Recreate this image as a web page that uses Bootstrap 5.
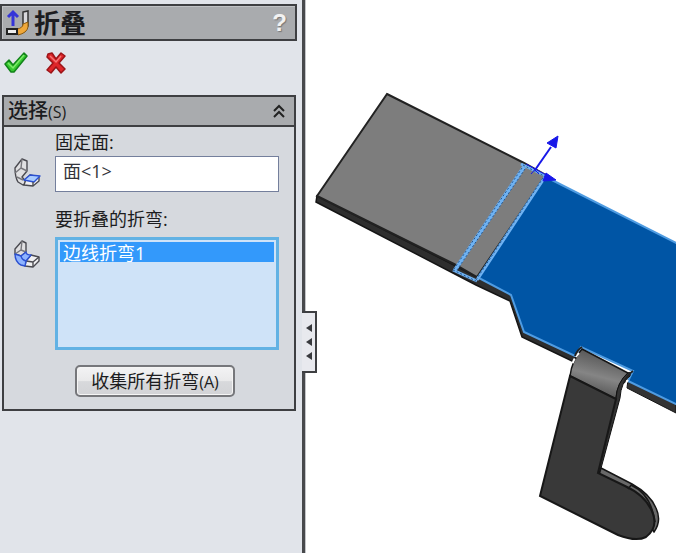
<!DOCTYPE html>
<html lang="zh-CN">
<head>
<meta charset="utf-8">
<meta name="viewport" content="width=device-width, initial-scale=1">
<title>折叠</title>
<link rel="stylesheet" href="https://cdn.jsdelivr.net/npm/bootstrap@5.3.0/dist/css/bootstrap.min.css">
<style>
  body { font-family: "Open Sans", "Noto Sans CJK SC", sans-serif; font-size: 18px; line-height: 24px; color: #1c1c20; background: #fff; }
  svg { display: block; flex: none; }
  .property-panel { width: 305px; flex: none; padding: 4px 5px 0 0; background: #e1e4ea; border-right: 3px solid #48494c; box-shadow: 1px 0 0 #c4c5c8; }
  .title-bar { height: 37px; margin-bottom: 9px; background: #a9abae; border: 2px solid #3e3f42; box-shadow: inset 1px 1px 0 #c0c2c5; }
  .title-bar h1 { font-size: 26px; line-height: 32px; font-weight: 700; }
  .plain-btn { border: 0; padding: 0; background: none; color: #222; }
  .help-btn { font: bold 24px/32px "Liberation Sans", sans-serif; color: #f2f2f2; text-shadow: 1px 1px 1px #777; }
  .action-row { height: 25px; margin-bottom: 20px; }
  .group-panel { margin: 0 1px 0 2px; background: #d6d9de; border: 2px solid #3e3f42; }
  .group-head { height: 30px; background: #a9abae; border-bottom: 2px solid #3e3f42; }
  .group-head h2 { font-size: 20px; line-height: 28px; font-weight: 500; }
  .latin { font-size: 16px; font-weight: 400; }
  .group-body { padding: 3px 15px 12px 8px; }
  .field-row { display: grid; grid-template-columns: 30px 1fr; column-gap: 13px; row-gap: 2px; margin-bottom: 15px; }
  .field-row > label, .field-row > .entry { grid-column: 2; }
  .field-row > svg { grid-column: 1; grid-row: 2; }
  .entry { width: 100%; font-size: 18px; line-height: 24px; border-radius: 0; }
  .face-entry { height: 36px; padding: 0 7px 9px; border: 1px solid #747f9c; color: #33343a; background: #fff; }
  .bend-list { height: 113px; padding: 2px; border: 3px solid #62b2e4; background: #cfe3f8; overflow: hidden; outline: 0; appearance: none; }
  .bend-list option { display: flex; align-items: center; height: 20px; min-height: 20px; padding: 0 3px; font-size: 18px; }
  .bend-list option:checked { background: #3399fb linear-gradient(#3399fb, #3399fb); -webkit-text-fill-color: #fff; }
  .collect-row { padding-left: 63px; }
  .collect-btn { width: 160px; height: 32px; padding: 0; font-size: 18px; line-height: 28px; border: 2px solid #76777b; border-radius: 5px; color: #1c1c20; background: linear-gradient(#f3f3f4, #e9e9ea 50%, #d8d9dc 52%, #d2d3d6); box-shadow: inset 0 0 0 1px #f5f5f5; }
  .collapse-handle { position: absolute; z-index: 2; left: 302px; top: 311px; width: 15px; height: 62px; padding: 10px 0; background: #e8e9ee; border: 2px solid #3e3f42; border-left: 0; }
  .model-view { overflow: hidden; }
</style>
<script src="https://cdn.jsdelivr.net/npm/bootstrap@5.3.0/dist/js/bootstrap.bundle.min.js"></script>
</head>
<body>
<div class="d-flex min-vh-100 position-relative">
  <aside class="property-panel">
    <header class="title-bar d-flex align-items-center">
      <svg width="28" height="28" viewBox="0 0 28 28" class="ms-1">
        <path d="M17 3l5-1v15l-5 2z" fill="#d8d8dc" stroke="#333" stroke-width="1.5"/>
        <path d="M22 13v5q-1 6-10 8l-1-6q6-1 6-5z" fill="#f0a83a" stroke="#8a5a10" stroke-width="1"/>
        <path d="M1 20h10v5H1z" fill="#eee" stroke="#222" stroke-width="2"/>
        <path d="M7 17V4M2 8l5-5 5 5" fill="none" stroke="#3434d8" stroke-width="3"/>
      </svg>
      <h1 class="m-0">折叠</h1>
      <button type="button" class="plain-btn help-btn ms-auto me-2" aria-label="帮助">?</button>
    </header>

    <div class="action-row d-flex gap-3">
      <button type="button" class="plain-btn ms-1" aria-label="确定">
        <svg width="25" height="22" viewBox="0 0 25 22"><path d="M1 12l4-4 4 5L20 1l3 3L10 20H7z" fill="#35c82e" stroke="#12831a" stroke-width="1.5" stroke-linejoin="round"/><path d="M4 11l5 5L20 3" fill="none" stroke="#7bea68" stroke-width="1.5"/></svg>
      </button>
      <button type="button" class="plain-btn" aria-label="取消">
        <svg width="22" height="22" viewBox="0 0 22 22"><path d="M3 2l4-1 4 6 5-6 4 3-6 7 6 6-4 4-5-6-5 6-4-3 6-7-6-6z" fill="#de262a" stroke="#9c1418" stroke-width="1.5" stroke-linejoin="round"/><path d="M5 4l6 6 5-6" fill="none" stroke="#f67474" stroke-width="1.5"/></svg>
      </button>
    </div>

    <section class="group-panel">
      <div class="group-head d-flex align-items-center justify-content-between">
        <h2 class="m-0 ms-1">选择<span class="latin">(S)</span></h2>
        <button type="button" class="plain-btn me-2" aria-label="折叠选择组">
          <svg width="14" height="16" viewBox="0 0 14 16" fill="none" stroke="#222" stroke-width="2"><path d="M2 8l5-5 5 5M2 14l5-5 5 5"/></svg>
        </button>
      </div>
      <div class="group-body">
        <div class="field-row">
          <label for="face">固定面:</label>
          <svg width="30" height="32" viewBox="0 0 30 32" stroke="#4a4a50" stroke-width="1.4" stroke-linejoin="round">
            <path d="M3 12l7-9 5 2v10l-5 6 5 6-4 2-5-3q-3-5-3-14z" fill="#e0e0e2"/>
            <path d="M10 3l-1 9-6 5M9 12l6 3M5 21l6 3" fill="none" stroke="#77777c"/>
            <path d="M14 23l4-4 9 2v4l-6 5-9-1z" fill="#f0f0f2"/>
            <path d="M12 24l6-5 10 1-6 6z" fill="#a9ccff" stroke="#2b50d0"/>
            <path d="M21 26v4" fill="none"/>
          </svg>
          <input id="face" class="entry face-entry" type="text" value="面&lt;1&gt;">
        </div>
        <div class="field-row">
          <label for="bends" class="mb-1">要折叠的折弯:</label>
          <svg width="30" height="32" viewBox="0 0 30 32" stroke="#4a4a50" stroke-width="1.4" stroke-linejoin="round">
            <path d="M3 12l7-8 4 2v9l-5 4-6-2z" fill="#e0e0e2"/>
            <path d="M10 4l-1 9-6 4M9 13l5 2" fill="none" stroke="#77777c"/>
            <path d="M14 24l5-6 8 2v4l-6 6-8-1z" fill="#f0f0f2"/>
            <path d="M21 25l6-5M21 25v5M14 24l7 1" fill="none"/>
            <path d="M3 17l6 2 5-4q0 3 5 3l-5 6-1 5-4-1q-6-3-6-11z" fill="#8eb4ff" stroke="#2b50d0"/>
            <path d="M9 19q1 4 5 5" fill="none" stroke="#2b50d0"/>
          </svg>
          <select id="bends" class="entry bend-list" size="5"><option selected>边线折弯1</option></select>
        </div>
        <div class="collect-row">
          <button type="button" class="collect-btn">收集所有折弯<span class="latin">(A)</span></button>
        </div>
      </div>
    </section>
  </aside>

  <button type="button" class="collapse-handle" aria-label="收起面板">
    <svg width="13" height="38" viewBox="0 0 13 38" fill="#38393d"><path d="M10 1v8L4 5zM10 15v8l-6-4zM10 29v8l-6-4z"/></svg>
  </button>

  <main class="model-view flex-grow-1">
    <svg width="371" height="553" viewBox="305 0 371 553" role="img" aria-label="钣金零件">
      <defs>
        <linearGradient id="bendShade" x1="0.3" y1="0" x2="0" y2="1"><stop offset="0" stop-color="#555"/><stop offset=".45" stop-color="#858585"/><stop offset="1" stop-color="#3b3b3b"/></linearGradient>
      </defs>
      <path d="M317 196L454 265 477 277 513 295 524 330 576 355 574 362 522 337 510 301 476 285 316 202z" fill="#2e2e2e" stroke="#151515" stroke-width="1.5"/>
      <path d="M387 94L524 163 546 175 477 277 454 264 317 196z" fill="#7d7d7d" stroke="#222" stroke-width="2"/>
      <path d="M628 379L676 405V413L627 388z" fill="#333" stroke="#151515"/>
      <path d="M544 176L680 245V406L628 381 633 371 581 347 575 356 524 332 511 295 477 277z" fill="#0055a5"/>
      <path d="M544 176L680 245M680 406L628 381 633 371 581 347 575 356 524 332 511 295 477 277" fill="none" stroke="#4f9ce2" stroke-width="2"/>
      <path d="M582 349L628 373Q617 384 616 399L570 376Q572 360 582 349z" fill="url(#bendShade)" stroke="#151515" stroke-width="1.5"/>
      <path d="M628 373q3-2 2 3-9 6-10 22l-20 74-2-2 18-72q1-16 12-25z" fill="#333" stroke="#111"/>
      <path d="M579 353q-5 5-7 12M628 380q-4 5-5 12" fill="none" stroke="#fff" stroke-width="2" stroke-dasharray="5 2"/>
      <path d="M582 347q-5 3-7 9M633 371q-6 4-9 12" fill="none" stroke="#222" stroke-width="2"/>
      <path d="M601 468L632 484Q650 494 656 508Q662 521 654 532L640 510 599 475z" fill="#686868" stroke="#151515" stroke-width="1.5"/>
      <path d="M570 376L616 399 598 473 625 486Q647 496 653 514Q658 528 646 537Q636 542 618 535L540 496z" fill="#393939" stroke="#171717" stroke-width="2"/>
      <path d="M628 489l4-5M631 485q20 9 24 37" fill="none" stroke="#171717" stroke-width="1.5"/>
      <g fill="none" stroke="#6fb2f2" stroke-width="4">
        <path d="M524 167L455 270"/>
        <path d="M521 164L546 176M545 177L477 280M453 270L477 281" stroke-width="3"/>
        <g stroke="#24568f" stroke-width="1" stroke-dasharray="2 2"><path d="M522 168L454 269M525 169L457 270M523 165L546 177M543 178L476 280M453 270L476 281"/></g>
      </g>
      <g fill="#1717e8" stroke="#1717e8"><path d="M535 170L551 147" stroke-width="2"/><path d="M558 136L556 148 547 143z"/><path d="M526 164L546 175" stroke-width="1"/><path d="M546 173L556 180 543 181z"/><path d="M531 166l8 8M539 165l-8 9" stroke-width="1"/></g>
    </svg>
  </main>
</div>
</body>
</html>
